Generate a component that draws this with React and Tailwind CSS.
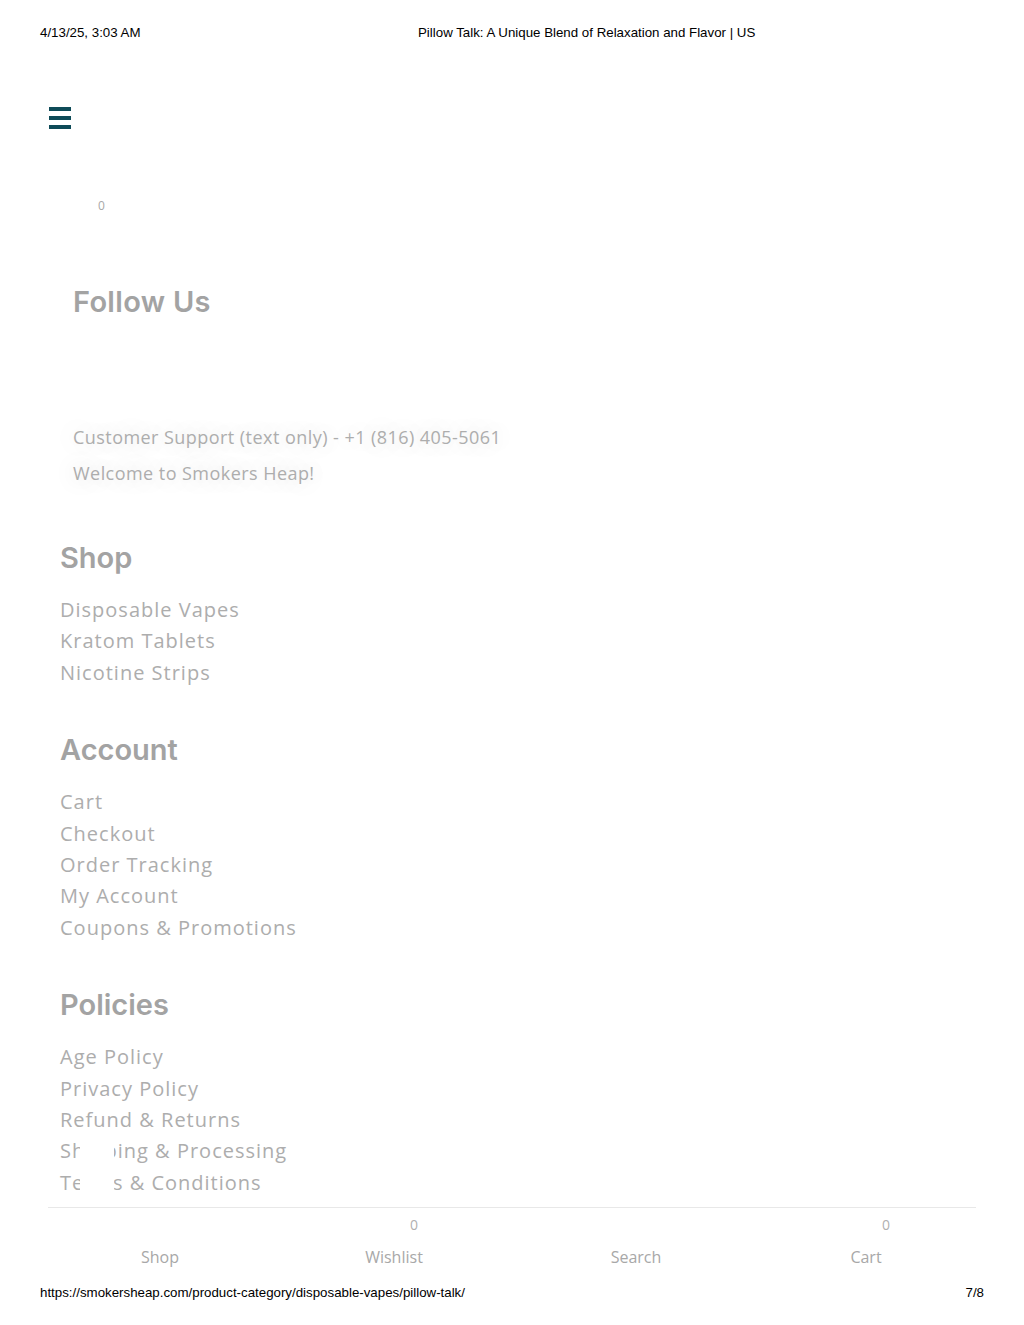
const body = { fontFamily: '"Open Sans", "Noto Sans", sans-serif' }
const head = { fontFamily: 'Inter, "Noto Sans", sans-serif' }
const print = { fontFamily: '"Liberation Sans", Arial, sans-serif' }

const sections = [
  { title: "Shop", links: ["Disposable Vapes", "Kratom Tablets", "Nicotine Strips"] },
  { title: "Account", links: ["Cart", "Checkout", "Order Tracking", "My Account", "Coupons & Promotions"] },
  { title: "Policies", links: ["Age Policy", "Privacy Policy", "Refund & Returns", "Shipping & Processing", "Terms & Conditions"] },
]

const navItems = [
  { label: "Shop", badge: null },
  { label: "Wishlist", badge: "0" },
  { label: "Search", badge: null },
  { label: "Cart", badge: "0" },
]

const App = () => {
  return (
    <div className="relative h-[1325px] w-[1024px] bg-white overflow-hidden" style={body}>
      {/* print header */}
      <div className="flex items-center h-[66px] px-10 text-[13.3px] text-black" style={print}>
        <span className="w-[378px]">4/13/25, 3:03 AM</span>
        <span>Pillow Talk: A Unique Blend of Relaxation and Flavor | US</span>
      </div>

      {/* hamburger */}
      <div className="pl-[49px] pt-[41px]">
        <div className="flex flex-col gap-[5px] w-[22px]">
          <span className="h-[4px] bg-[#0e4b58]"></span>
          <span className="h-[4px] bg-[#0e4b58]"></span>
          <span className="h-[4px] bg-[#0e4b58]"></span>
        </div>
      </div>

      <div className="pl-[98px] pt-[69px] text-[12px] leading-[16px] text-[#a8a8a8]">0</div>

      {/* follow us */}
      <div className="pl-[73px] pt-[71px]">
        <h2 className="text-[29px] leading-[34px] font-semibold tracking-[0.3px] text-[#a3a3a3]" style={head}>Follow Us</h2>
        <div className="pt-[105px] text-[18px] tracking-[0.45px] text-[#adadad] [text-shadow:0_0_22px_rgba(0,0,0,0.22)]">
          <p className="leading-[26px]">Customer Support (text only) - +1 (816) 405-5061</p>
          <p className="leading-[26px] mt-[10px]">Welcome to Smokers Heap!</p>
        </div>
      </div>

      {/* link sections */}
      <div className="pl-[60px] pt-[54px] flex flex-col gap-[44px]">
        {sections.map((s) => (
          <div key={s.title}>
            <h3 className="text-[29px] leading-[36px] font-semibold text-[#a3a3a3]" style={head}>{s.title}</h3>
            <ul className="mt-[18px] text-[20px] tracking-[1px] leading-[31.4px] text-[#adadad]">
              {s.links.map((l) => (
                <li key={l}>{l}</li>
              ))}
            </ul>
          </div>
        ))}
      </div>

      {/* floating white patch over links */}
      <div className="absolute left-[80px] top-[1139px] w-[34px] h-[58px] bg-white"></div>

      {/* bottom nav */}
      <div className="absolute left-[48px] top-[1207px] w-[928px] border-t border-[#e8e8e8]">
        <div className="grid grid-cols-[224px_244px_240px_220px] h-[68px]">
          {navItems.map((n) => (
            <div key={n.label} className="relative flex flex-col items-center justify-end pb-[9px]">
              {n.badge && (
                <span className="absolute top-[8px] left-1/2 ml-[16px] text-[14px] leading-[18px] text-[#b0b0b0]">{n.badge}</span>
              )}
              <span className="text-[16px] leading-[20px] text-[#a8a8a8]">{n.label}</span>
            </div>
          ))}
        </div>
      </div>

      {/* print footer */}
      <div className="absolute left-0 right-0 top-[1283px] flex justify-between px-10 text-[13.3px] text-black" style={print}>
        <span>https://smokersheap.com/product-category/disposable-vapes/pillow-talk/</span>
        <span>7/8</span>
      </div>
    </div>
  )
}

export default App
